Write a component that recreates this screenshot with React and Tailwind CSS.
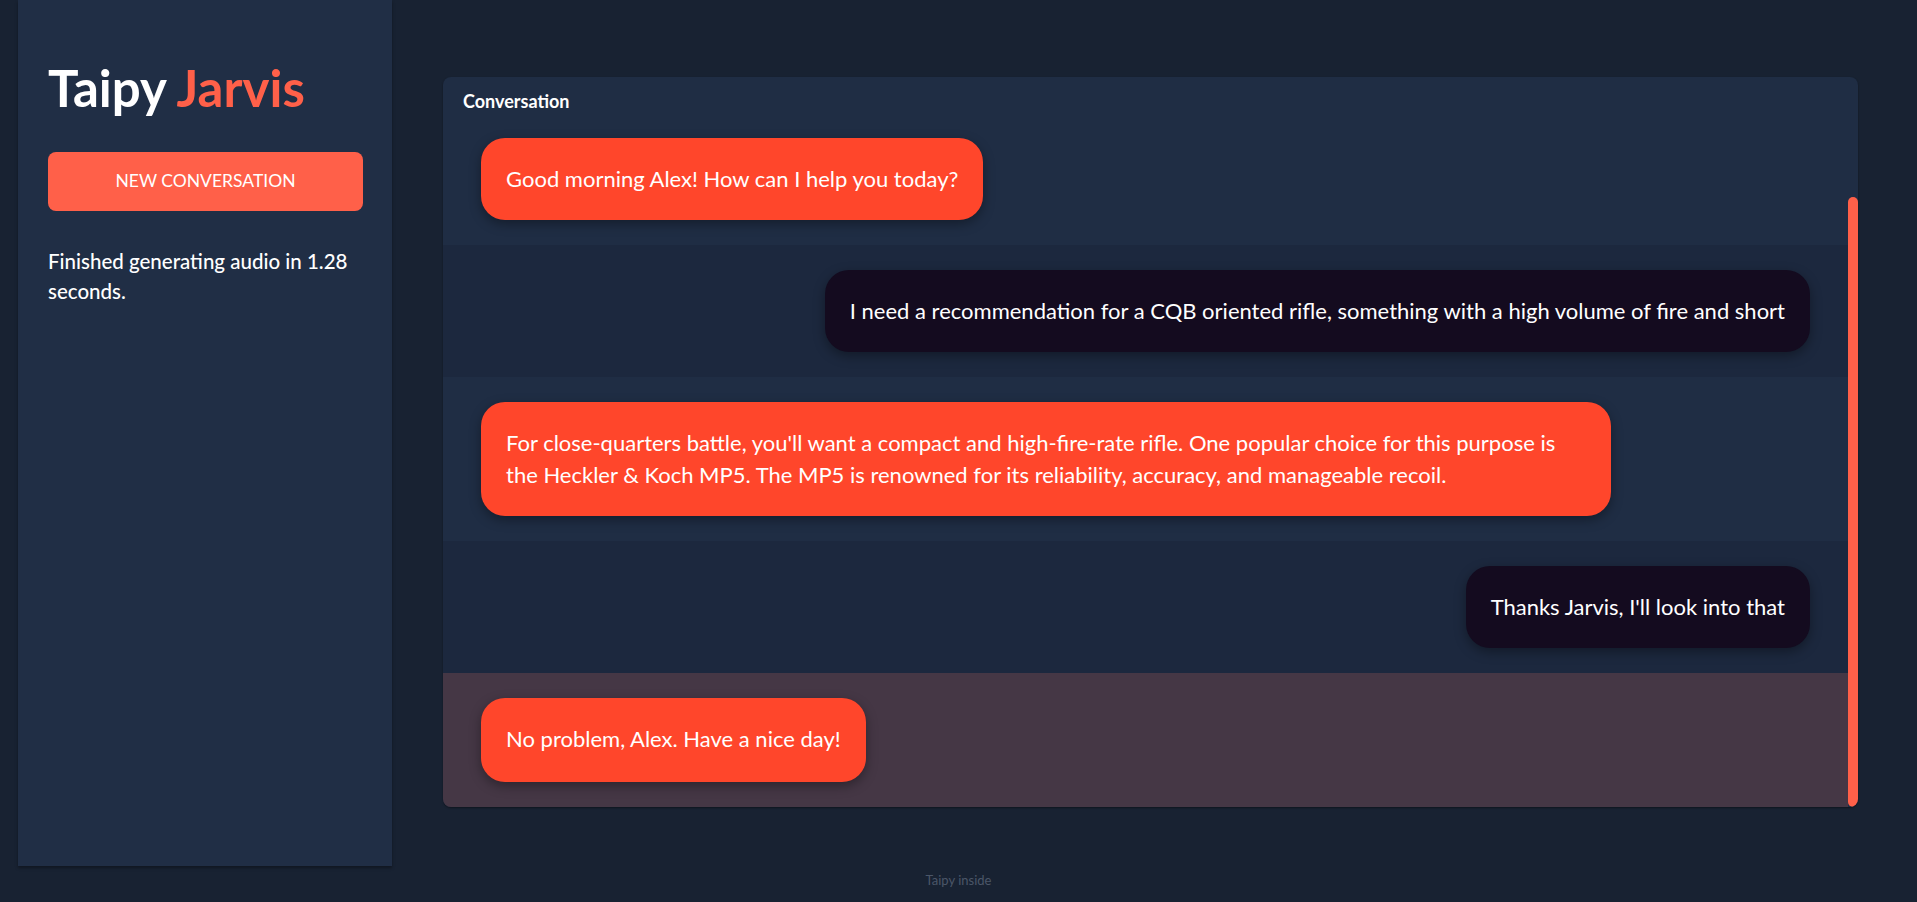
import React from "react";

const messages = [
  { from: "bot", text: "Good morning Alex! How can I help you today?", bg: "bg-[#1f2d44]" },
  {
    from: "user",
    text: "I need a recommendation for a CQB oriented rifle, something with a high volume of fire and short",
    bg: "bg-[#1c283e]",
  },
  {
    from: "bot",
    text: "For close-quarters battle, you'll want a compact and high-fire-rate rifle. One popular choice for this purpose is the Heckler & Koch MP5. The MP5 is renowned for its reliability, accuracy, and manageable recoil.",
    bg: "bg-[#1f2d44]",
  },
  { from: "user", text: "Thanks Jarvis, I'll look into that", bg: "bg-[#1c283e]" },
  { from: "bot", text: "No problem, Alex. Have a nice day!", bg: "bg-[#453745]" },
];

const App = () => {
  return (
    <div className="min-h-screen bg-[#182232] text-white font-['Lato','Liberation_Sans',sans-serif] flex flex-col">
      <div className="flex h-[866px]">
        {/* sidebar */}
        <div className="ml-[18px] w-[374px] bg-[#202e45] shadow-[0_2px_3px_rgba(0,0,0,0.35)] pt-[58px] px-[30px]">
          <h1 className="text-[51px] leading-[60px] font-bold">
            Taipy <span className="text-[#ff6049]">Jarvis</span>
          </h1>
          <button className="mt-[34px] w-[315px] h-[59px] rounded-lg bg-[#ff6049] text-[17.5px] text-white">
            NEW CONVERSATION
          </button>
          <p className="mt-[35px] w-[315px] text-[20.5px] leading-[30px] font-medium">
            Finished generating audio in 1.28 seconds.
          </p>
        </div>

        {/* main */}
        <div className="flex-1 pl-[51px] pr-[59px] pt-[77px]">
          <div className="h-[730px] rounded-lg bg-[#1f2d44] shadow-[0_1px_2px_rgba(0,0,0,0.4)] overflow-hidden flex">
            <div className="flex-1 flex flex-col">
              <div className="h-[36px] pt-[13px] pl-[20px] text-[18px] leading-[23px] font-bold">
                Conversation
              </div>
              {messages.map((m, i) => (
                <div
                  key={i}
                  className={`${m.bg} ${i === messages.length - 1 ? "flex-1" : ""} px-[38px] py-[25px] flex ${
                    m.from === "user" ? "justify-end" : "justify-start"
                  }`}
                >
                  <div
                    className={`max-w-[85%] rounded-[24px] px-[25px] py-[25px] text-[22px] leading-[32px] shadow-[0_4px_12px_rgba(0,0,0,0.35)] ${
                      m.from === "user" ? "bg-[#140b1f]" : "bg-[#ff462b]"
                    }`}
                  >
                    {m.text}
                  </div>
                </div>
              ))}
            </div>
            {/* scrollbar */}
            <div className="w-[10px] pt-[120px] flex flex-col">
              <div className="flex-1 rounded-full bg-[#ff6049]" />
            </div>
          </div>
        </div>
      </div>
      <div className="h-[30px] flex items-center justify-center text-[13px] text-[#4b5668]">
        Taipy inside
      </div>
    </div>
  );
};

export default App;
